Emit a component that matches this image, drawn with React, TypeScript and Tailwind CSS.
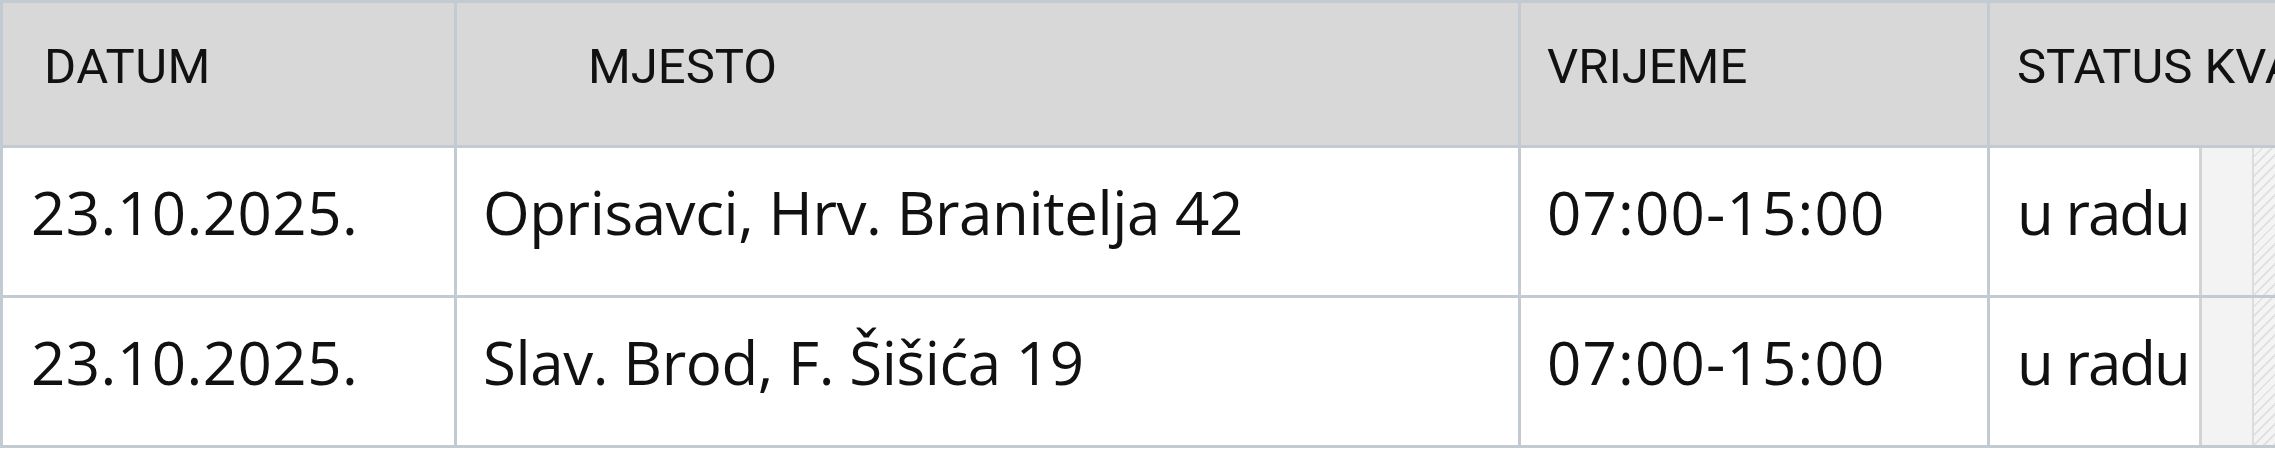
const rows = [
  { date: '23.10.2025.', place: 'Oprisavci, Hrv. Branitelja 42', time: '07:00-15:00', status: 'u radu' },
  { date: '23.10.2025.', place: 'Slav. Brod, F. Šišića 19', time: '07:00-15:00', status: 'u radu' },
]

const headCell = 'flex h-[142px] items-center whitespace-nowrap bg-[#d8d8d8] pb-[14px] font-["Roboto",sans-serif] text-[49px] text-[#111]'
const bodyCell = 'flex h-[147px] items-center whitespace-nowrap bg-white pb-[20px] font-["Open_Sans",sans-serif] text-[60px] text-[#111]'

export default function App() {
  return (
    <div className="h-[449px] w-[2275px] overflow-hidden bg-white">
      <div className="grid w-[2500px] grid-cols-[451px_1061px_466px_1fr] gap-[3px] bg-[#c4cad2] p-[3px]">
        <div className={`${headCell} pl-[41px] tracking-[0.5px]`}>DATUM</div>
        <div className={`${headCell} pl-[131px]`}>MJESTO</div>
        <div className={`${headCell} pl-[26px]`}>VRIJEME</div>
        <div className={`${headCell} pl-[27px]`}>STATUS KVARA</div>

        {rows.map((r, i) => (
          <div key={i} className="contents">
            <div className={`${bodyCell} pl-[28px] tracking-[0.5px]`}>{r.date}</div>
            <div className={`${bodyCell} pl-[26px] tracking-[-0.4px]`}>{r.place}</div>
            <div className={`${bodyCell} pl-[26px] tracking-[1.2px]`}>{r.time}</div>
            <div className="flex h-[147px]">
              <div className={`${bodyCell} w-[209px] shrink-0 pl-[27px] tracking-[-2px]`}>{r.status}</div>
              <div className="w-[3px] shrink-0 bg-[#d3d3d3]" />
              <div className="w-[50px] shrink-0 bg-[#f3f3f3]" />
              <div className="w-[2px] shrink-0 bg-[#dcdcdc]" />
              <div className="flex-1 bg-[repeating-linear-gradient(135deg,#f4f4f4_0px,#f4f4f4_5px,#e2e2e2_5px,#e2e2e2_7px)]" />
            </div>
          </div>
        ))}
      </div>
    </div>
  )
}
